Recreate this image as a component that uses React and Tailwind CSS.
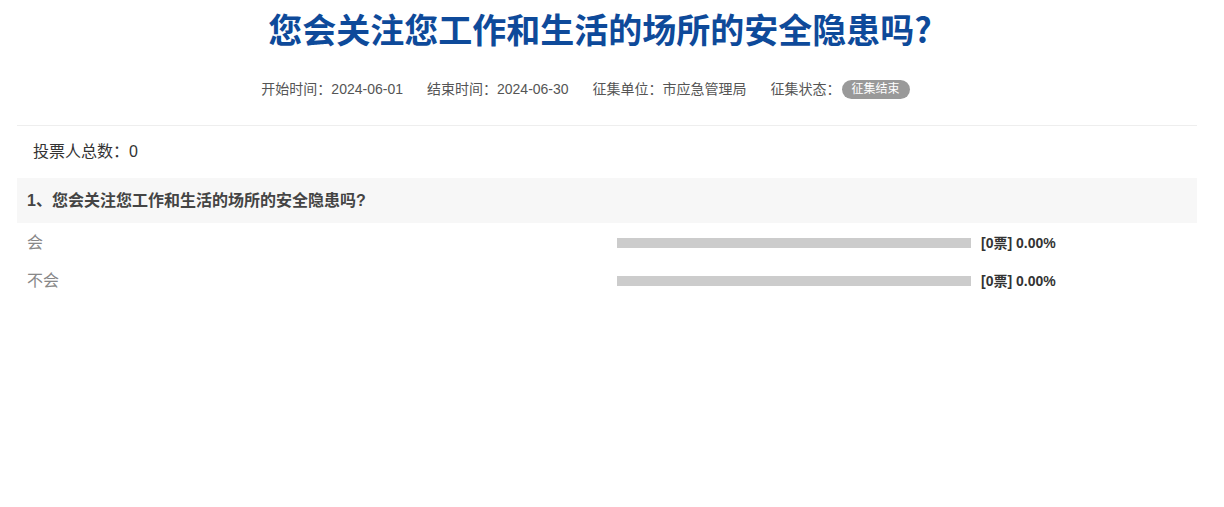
import React from "react";

const font = { fontFamily: '"Liberation Sans", "Noto Sans CJK SC", sans-serif' };

const options = [
  { label: "会", votes: 0, pct: 0 },
  { label: "不会", votes: 0, pct: 0 },
];

const App = () => {
  return (
    <div className="w-[1224px] min-h-[507px] bg-white" style={font}>
      <div className="ml-[17px] w-[1180px]">
        {/* Header */}
        <div className="border-b border-[#eeeeee] pb-[26px]">
          <h1 className="pt-[7px] pr-[14px] text-center text-[34px] leading-[44px] font-bold text-[#0e4a9a] font-['Noto_Sans_CJK_SC',sans-serif]">
            您会关注您工作和生活的场所的安全隐患吗?
          </h1>
          <div className="mt-[28px] pr-[43px] flex items-center justify-center gap-[24px] text-[14px] text-[#555555] leading-[20px]">
            <span>开始时间：2024-06-01</span>
            <span>结束时间：2024-06-30</span>
            <span>征集单位：市应急管理局</span>
            <span className="flex items-center">
              征集状态：
              <span className="ml-[1px] inline-flex h-[19px] items-center rounded-full bg-[#999999] px-[10px] text-[12px] text-white">
                征集结束
              </span>
            </span>
          </div>
        </div>

        {/* Total */}
        <div className="pl-[16px] pt-[15px] pb-[15px] text-[16px] leading-[22px] text-[#333333]">
          投票人总数：0
        </div>

        {/* Question */}
        <div className="flex h-[45px] items-center bg-[#f7f7f7] px-[10px] text-[16px] font-bold text-[#444444]">
          1、您会关注您工作和生活的场所的安全隐患吗?
        </div>

        {/* Options */}
        <div className="pt-[1px]">
          {options.map((o) => (
            <div key={o.label} className="flex h-[38px] items-center">
              <div className="w-[600px] pl-[10px] text-[16px] text-[#888888]">{o.label}</div>
              <div className="h-[10px] w-[354px] bg-[#cccccc]">
                <div className="h-full bg-[#0e4a9a]" style={{ width: `${o.pct}%` }} />
              </div>
              <div className="ml-[10px] text-[14px] font-bold text-[#333333]">
                [{o.votes}票] {o.pct.toFixed(2)}%
              </div>
            </div>
          ))}
        </div>
      </div>
    </div>
  );
};

export default App;
